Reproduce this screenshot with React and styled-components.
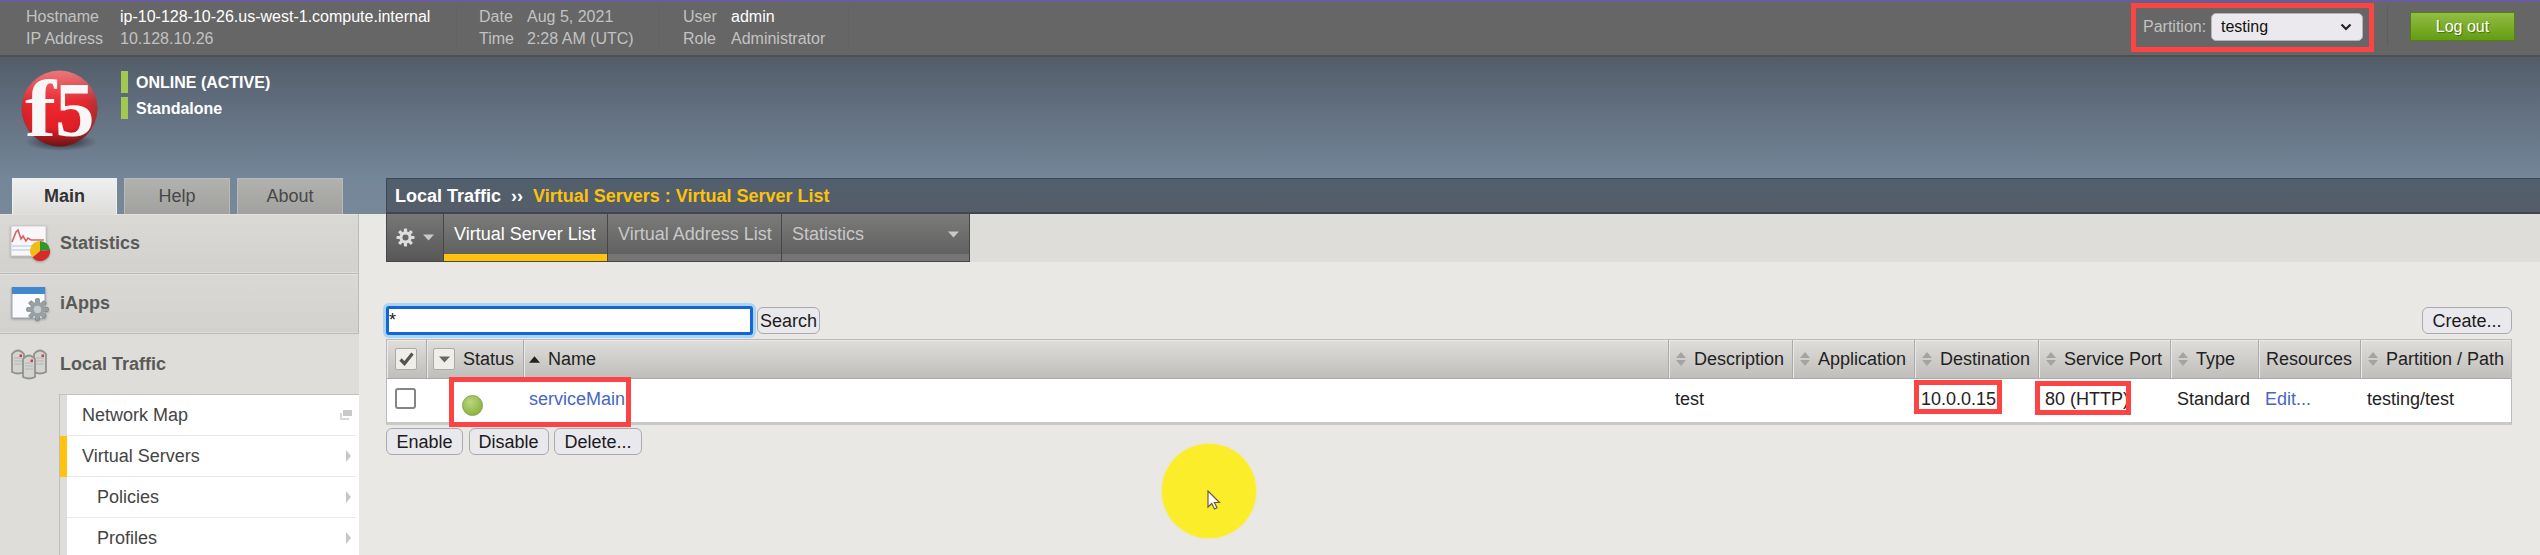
import React from 'react';
import styled, { createGlobalStyle } from 'styled-components';

const Global = createGlobalStyle`
  * { box-sizing: border-box; }
  body { margin: 0; background: #e9e8e4; }
`;

const Page = styled.div`
  position: relative;
  width: 2540px;
  height: 555px;
  overflow: hidden;
  background: #e9e8e4;
  font-family: "Liberation Sans", Arial, sans-serif;
  font-size: 18px;
  color: #222;
  white-space: nowrap;
`;

/* ---------- top bar ---------- */
const TopBar = styled.header`
  display: flex;
  height: 57px;
  padding-right: 25px;
  background: #666;
  border-top: 2px solid #6a5aa0;
  border-bottom: 2px solid #4c5253;
  font-size: 16px;
  color: #c2c2c2;
`;
const InfoGroup = styled.dl`
  display: grid;
  grid-template-columns: ${p => p.$label}px auto;
  grid-auto-rows: 22px;
  align-items: center;
  width: ${p => p.$width}px;
  height: 44px;
  margin: 4px 0 0;
  padding-left: ${p => p.$pad}px;
  border-right: 1px solid #626262;
`;
const InfoLabel = styled.dt`margin: 0;`;
const InfoValue = styled.dd`
  margin: 0;
  color: ${p => (p.$strong ? '#fff' : '#c2c2c2')};
`;
const TopRight = styled.div`
  display: flex;
  align-items: flex-start;
  margin-left: auto;
`;
const PartitionBox = styled.div`
  display: flex;
  align-items: center;
  justify-content: space-between;
  width: 243px;
  height: 49px;
  margin: 1px 13px 0 0;
  padding: 0 6px 2px 7px;
  border: 5px solid #fd4444;
`;
const Select = styled.div`
  display: flex;
  align-items: center;
  justify-content: space-between;
  width: 152px;
  height: 28px;
  padding: 0 10px 0 9px;
  border: 1px solid #b5b5b8;
  border-radius: 5px;
  background: #ebe9ed;
  color: #111;
`;
const LogoutArea = styled.div`
  height: 40px;
  margin-top: 4px;
  padding: 6px 0 0 22px;
  border-left: 1px solid #5e5e5e;
`;
const Logout = styled.button`
  display: block;
  width: 105px;
  height: 29px;
  padding: 0;
  border: 1px solid #568012;
  background: linear-gradient(#92bd45, #659c10);
  color: #fff;
  font: 16px "Liberation Sans", Arial, sans-serif;
  text-shadow: 1px 1px 1px #46700f;
`;

/* ---------- banner ---------- */
const Banner = styled.div`
  display: flex;
  flex-direction: column;
  justify-content: space-between;
  height: 157px;
  background: linear-gradient(#535d69 0, #5d6978 22%, #748699 77%, #778899 100%);
`;
const Brand = styled.div`
  display: flex;
  height: 100px;
  padding: 12px 0 0 16px;
`;
const StatusList = styled.div`
  display: flex;
  flex-direction: column;
  gap: 4px;
  margin: 2px 0 0 15px;
`;
const StatusLine = styled.div`
  height: 22px;
  padding-left: 8px;
  border-left: 7px solid #a2c753;
  color: #fff;
  font-size: 16px;
  font-weight: bold;
  line-height: 23px;
`;
const BannerBottom = styled.div`display: flex; height: 36px;`;
const Tabs = styled.nav`
  display: flex;
  gap: 7px;
  width: 386px;
  padding-left: 12px;
`;
const Tab = styled.a`
  width: ${p => p.$w}px;
  height: 36px;
  border: 1px solid ${p => (p.$active ? '#efefed' : '#b9b9b7')};
  border-bottom: 0;
  background: ${p => (p.$active ? 'linear-gradient(#eeefef, #deddda)' : 'linear-gradient(#b1b1ae, #a1a19f)')};
  color: ${p => (p.$active ? '#333' : '#484848')};
  font-weight: ${p => (p.$active ? 'bold' : 'normal')};
  line-height: 34px;
  text-align: center;
`;
const Breadcrumb = styled.div`
  display: flex;
  flex: 1;
  gap: 10px;
  padding-left: 8px;
  border: 1px solid #3c4656;
  border-width: 1px 0 2px 1px;
  background: linear-gradient(#515f6e, #555d67);
  color: #fff;
  font-weight: bold;
  line-height: 34px;
`;
const Current = styled.span`color: #fcc20c;`;

/* ---------- sidebar ---------- */
const Columns = styled.div`display: flex; height: 341px;`;
const Sidebar = styled.aside`
  width: 359px;
  background: #deddda;
`;
const Section = styled.div`
  display: flex;
  align-items: center;
  gap: 8px;
  height: 60px;
  padding: 0 0 0 8px;
  color: #5a5a58;
  font-weight: bold;
  ${p => !p.$open && `
    background: linear-gradient(#dad9d6, #d2d1ce);
    border-right: 1px solid #bbb;
    border-bottom: 1px solid #bcbbb8;
    box-shadow: inset 0 1px #e2e1df, inset 0 -1px #dddcd9;
  `}
`;
const SubMenu = styled.div`
  margin-left: 59px;
  border-left: 1px solid #bdbdba;
  border-top: 1px solid #c4c3c0;
`;
const SubItem = styled.a`
  display: flex;
  align-items: center;
  justify-content: space-between;
  height: 41px;
  padding: 0 7px 1px ${p => (p.$nested ? 30 : 15)}px;
  border-left: 7px solid ${p => (p.$selected ? '#ffc20e' : '#deddda')};
  background: linear-gradient(#e9e9e9, #e9e9e9) left bottom / calc(100% - 3px) 1px no-repeat #fff;
  color: #444;
`;

/* ---------- main area ---------- */
const Main = styled.main`flex: 1; padding-left: 27px;`;
const ToolStrip = styled.div`
  display: flex;
  height: 48px;
  background: #deddda;
`;
const Tool = styled.a`
  display: flex;
  align-items: center;
  justify-content: space-between;
  width: ${p => p.$w}px;
  height: 48px;
  padding: 0 ${p => p.$right || 0}px ${p => (p.$icons ? 0 : 7)}px ${p => (p.$icons ? 9 : 10)}px;
  border: 1px solid #474747;
  border-width: 0 1px 1px ${p => (p.$icons ? 1 : 0)}px;
  background: ${p => (p.$icons ? 'linear-gradient(#777, #575757)'
    : `linear-gradient(#7b7b79, #616161 40px, ${p.$active ? '#ffc20e' : '#757575'} 40px)`)};
  color: ${p => (p.$active ? '#fff' : '#c8c8c8')};
`;
const Controls = styled.div`
  display: flex;
  align-items: flex-start;
  height: 33px;
  margin: 44px 28px 0 0;
`;
const SearchField = styled.div`
  width: 367px;
  height: 29px;
  padding-left: 0;
  border: 3px solid #1564d8;
  border-radius: 3px;
  background: #fff;
  box-shadow: 0 0 0 3px #a9d5f5;
  line-height: 23px;
`;
const Button = styled.button`
  width: ${p => p.$w}px;
  height: 27px;
  padding: 0;
  border: 1px solid #aaa9ad;
  border-radius: 6px;
  background: #e9e8ed;
  color: #1b1b1b;
  font: 18px/24px "Liberation Sans", Arial, sans-serif;
`;
const SearchButton = styled(Button)`margin: 1px 0 0 4px;`;
const CreateButton = styled(Button)`margin: 1px 0 0 auto;`;

const columnsTemplate = '40px 97px 1145px 124px 122px 124px 132px 88px 102px 1fr';
const Table = styled.div`
  width: 2126px;
  border: 1px solid #bbb;
  border-bottom: 3px solid #c9c9c8;
`;
const HeadRow = styled.div`
  display: grid;
  grid-template-columns: ${columnsTemplate};
  height: 39px;
  border-bottom: 1px solid #aaa9a6;
  background: linear-gradient(#dfdedb, #bfbeba);
`;
const HeadCell = styled.div`
  display: flex;
  align-items: center;
  gap: 8px;
  padding-left: ${p => p.$pad ?? 7}px;
  border-right: 1px solid #aaa;
  box-shadow: inset 1px 1px #eae9e7;
  &:last-child { border-right: 0; }
`;
const Row = styled.div`
  display: grid;
  grid-template-columns: ${columnsTemplate};
  height: 43px;
  background: #fff;
`;
const Cell = styled.div`
  position: relative;
  padding: 10px 0 0 ${p => p.$pad ?? 6}px;
`;
const Link = styled.a`color: #4766c4;`;
const SmallBox = styled.span`
  display: flex;
  align-items: center;
  justify-content: center;
  width: 22px;
  height: 22px;
  border: 1px solid #aaa;
  border-radius: 2px;
  background: #efeee9;
`;
const CheckBox = styled.span`
  display: block;
  width: 21px;
  height: 21px;
  margin-top: -1px;
  border: 2px solid #858585;
  border-radius: 3px;
  background: #fff;
`;
const Dot = styled.span`
  display: block;
  width: 21px;
  height: 21px;
  margin-top: 6px;
  border: 1px solid #80a34a;
  border-radius: 50%;
  background: radial-gradient(circle at 40% 32%, #b9d583, #8fb842 70%, #79a13a);
`;
const Highlight = styled.span`
  position: absolute;
  left: ${p => p.$x}px;
  top: ${p => p.$y}px;
  width: ${p => p.$w}px;
  height: ${p => p.$h}px;
  border: 5px solid #fd4444;
  z-index: 2;
`;
const Actions = styled.div`
  display: flex;
  gap: 5.5px;
  margin-top: 3px;
`;
const Spotlight = styled.div`
  position: absolute;
  left: 1162px;
  top: 444px;
  width: 94px;
  height: 94px;
  border-radius: 50%;
  background: #fced2b;
  box-shadow: 0 0 2px #fced2b;
  svg { position: absolute; left: 45px; top: 46px; }
`;

/* ---------- drawings ---------- */
const LogoSvg = styled.svg`overflow: visible;`;
const IconSvg = styled.svg`filter: drop-shadow(0 1px 1px #999);`;
const Logo = () => (
  <LogoSvg width="90" height="84" viewBox="0 0 90 84">
    <defs>
      <radialGradient id="ball" cx=".45" cy=".45" r=".6">
        <stop offset="0" stopColor="#ee2229" /><stop offset=".65" stopColor="#e01f27" />
        <stop offset="1" stopColor="#9c2f30" />
      </radialGradient>
      <linearGradient id="shine" x2="0" y2="1">
        <stop offset="0" stopColor="#fff" stopOpacity=".4" /><stop offset=".4" stopColor="#fff" stopOpacity=".05" />
        <stop offset=".75" stopColor="#400" stopOpacity="0" /><stop offset="1" stopColor="#300" stopOpacity=".55" />
      </linearGradient>
      <radialGradient id="shade">
        <stop offset="0" stopColor="#22282f" /><stop offset="1" stopColor="#22282f" stopOpacity="0" />
      </radialGradient>
    </defs>
    <ellipse cx="45" cy="73" rx="36" ry="9" fill="url(#shade)" />
    <circle cx="43.5" cy="39.5" r="38" fill="url(#ball)" />
    <circle cx="43.5" cy="39.5" r="38" fill="url(#shine)" />
    <g fill="#f7f7f7" fontFamily="Liberation Serif, serif" fontWeight="bold">
      <text transform="translate(9 67) scale(1.17 1)" fontSize="80">f</text>
      <text transform="translate(39 67) scale(1 1)" fontSize="79">5</text>
    </g>
  </LogoSvg>
);
const Chevron = () => (
  <svg width="12" height="8" viewBox="0 0 12 8"><path d="M1.500 1.500 6 6l4.500-4.500" fill="none" stroke="#222" strokeWidth="2.200" /></svg>
);
const Gear = ({ size, color, hole, stroke }) => (
  <svg width={size} height={size} viewBox="-10 -10 20 20">
    <g fill={color} stroke={stroke} strokeWidth={stroke ? 0.6 : 0}>
      {[0, 45, 90, 135].map(a => <rect key={a} x="-1.700" y="-9.500" width="3.400" height="19" rx=".8" transform={`rotate(${a})`} />)}
    </g>
    <circle r="6.500" fill={color} /><circle r="3.200" fill={hole} />
  </svg>
);
const Down = ({ color = '#c9c9c9', w = 11 }) => (
  <svg width={w} height="7" viewBox="0 0 11 7"><path d="M0 .5h11L5.500 6.500z" fill={color} /></svg>
);
const Sort = () => (
  <svg width="10" height="14" viewBox="0 0 10 14"><path d="M0 6 5 0l5 6zM0 8h10l-5 6z" fill="#a5a4a1" /></svg>
);
const StatsIcon = () => (
  <IconSvg width="44" height="40" viewBox="0 0 44 40">
    <rect x="3" y="2" width="35" height="30" fill="#f8f8fa" stroke="#ccc" />
    <path d="M3.500 22h34M3.500 26h34" stroke="#d5def0" strokeWidth="2" />
    <path d="M4 18 8 8l2-2 3 9 2-3 3 5 2-3 3 2h13" fill="none" stroke="#d66464" strokeWidth="1.600" />
    <path d="M32 27V17a10 10 0 0 0-7.500 16.500z" fill="#f0bd18" />
    <path d="M32 27V17a10 10 0 0 1 10 9z" fill="#33962a" />
    <path d="M32 27l10-1a10 10 0 0 1-17.500 7.500z" fill="#d92b26" />
  </IconSvg>
);
const AppsIcon = () => (
  <IconSvg width="44" height="40" viewBox="0 0 44 40">
    <rect x="4" y="4" width="33" height="30" fill="#fafbfc" stroke="#9aa4ad" />
    <rect x="4" y="3" width="33" height="7" fill="#4288ce" />
    <g transform="translate(18 14)"><Gear size={23} color="#98a0a3" hole="#c6cbcd" stroke="#7b8386" /></g>
  </IconSvg>
);
const Server = ({ x, y }) => (
  <g transform={`translate(${x} ${y})`}>
    <path d="M1 5Q7 -2 13 5V23Q7 26 1 23z" fill="#d3d3d0" stroke="#92928f" strokeWidth="1.800" />
    <path d="M3 9h8M3 12h8M3 15h8" stroke="#b5b5b5" />
    <rect x="8.500" y="5.500" width="2.500" height="2.500" fill="#d23c3c" />
  </g>
);
const TrafficIcon = () => (
  <svg width="44" height="34" viewBox="0 0 44 34"><Server x={3} y={2} /><Server x={25} y={2} /><Server x={14} y={7} /></svg>
);
const Arrow = () => (
  <svg width="7" height="12" viewBox="0 0 7 12"><path d="M1 0 6 6 1 12z" fill="#c6c6c6" /></svg>
);
const WindowIcon = () => (
  <svg width="12" height="10" viewBox="0 0 12 10"><path d="M3 0h9v6H3z" fill="#c9c9c9" /><path d="M1 3v6h8" fill="none" stroke="#ccc" strokeWidth="1.500" /></svg>
);
const Check = () => (
  <svg width="15" height="14" viewBox="0 0 15 14"><path d="M1.500 7.500 5.500 11.500 13.500 1.500" fill="none" stroke="#555" strokeWidth="3.200" /></svg>
);
const Pointer = () => (
  <svg width="14" height="20" viewBox="0 0 14 20"><path d="M1 1v16l3.700-3.500L7.500 19l2.500-1.200-2.600-5.300H12.500z" fill="#fff" stroke="#6b5a3a" strokeWidth="1.200" /></svg>
);

const sortable = ['Description', 'Application', 'Destination', 'Service Port', 'Type'];

export default function App() {
  return (
    <Page>
      <Global />
      <TopBar>
        <InfoGroup $label={94} $width={457} $pad={26}>
          <InfoLabel>Hostname</InfoLabel><InfoValue $strong>ip-10-128-10-26.us-west-1.compute.internal</InfoValue>
          <InfoLabel>IP Address</InfoLabel><InfoValue>10.128.10.26</InfoValue>
        </InfoGroup>
        <InfoGroup $label={48} $width={203} $pad={22}>
          <InfoLabel>Date</InfoLabel><InfoValue>Aug 5, 2021</InfoValue>
          <InfoLabel>Time</InfoLabel><InfoValue>2:28 AM (UTC)</InfoValue>
        </InfoGroup>
        <InfoGroup $label={48} $width={189} $pad={23}>
          <InfoLabel>User</InfoLabel><InfoValue $strong>admin</InfoValue>
          <InfoLabel>Role</InfoLabel><InfoValue>Administrator</InfoValue>
        </InfoGroup>
        <TopRight>
          <PartitionBox>Partition:<Select>testing<Chevron /></Select></PartitionBox>
          <LogoutArea><Logout>Log out</Logout></LogoutArea>
        </TopRight>
      </TopBar>

      <Banner>
        <Brand>
          <Logo />
          <StatusList>
            <StatusLine>ONLINE (ACTIVE)</StatusLine>
            <StatusLine>Standalone</StatusLine>
          </StatusList>
        </Brand>
        <BannerBottom>
          <Tabs>
            <Tab $w={105} $active>Main</Tab>
            <Tab $w={106}>Help</Tab>
            <Tab $w={106}>About</Tab>
          </Tabs>
          <Breadcrumb>
            <span>Local Traffic</span><span>››</span><Current>Virtual Servers : Virtual Server List</Current>
          </Breadcrumb>
        </BannerBottom>
      </Banner>

      <Columns>
        <Sidebar>
          <Section><StatsIcon />Statistics</Section>
          <Section><AppsIcon />iApps</Section>
          <Section $open><TrafficIcon />Local Traffic</Section>
          <SubMenu>
            <SubItem>Network Map<WindowIcon /></SubItem>
            <SubItem $selected>Virtual Servers<Arrow /></SubItem>
            <SubItem $nested>Policies<Arrow /></SubItem>
            <SubItem $nested>Profiles<Arrow /></SubItem>
          </SubMenu>
        </Sidebar>

        <Main>
          <ToolStrip>
            <Tool $w={58} $icons $right={9}><Gear size={19} color="#ddd" hole="#666" /><Down /></Tool>
            <Tool $w={164} $active>Virtual Server List</Tool>
            <Tool $w={174}>Virtual Address List</Tool>
            <Tool $w={188} $right={10}>Statistics<Down /></Tool>
          </ToolStrip>
          <Controls>
            <SearchField>*</SearchField>
            <SearchButton $w={63}>Search</SearchButton>
            <CreateButton $w={90}>Create...</CreateButton>
          </Controls>
          <Table>
            <HeadRow>
              <HeadCell $pad={8}><SmallBox><Check /></SmallBox></HeadCell>
              <HeadCell $pad={6}><SmallBox><Down color="#666" /></SmallBox>Status</HeadCell>
              <HeadCell $pad={5}>
                <svg width="11" height="7" viewBox="0 0 12 7"><path d="M0 7 6 0l6 7z" fill="#222" /></svg>Name
              </HeadCell>
              {sortable.map(name => <HeadCell key={name}><Sort />{name}</HeadCell>)}
              <HeadCell>Resources</HeadCell>
              <HeadCell><Sort />Partition / Path</HeadCell>
            </HeadRow>
            <Row>
              <Cell $pad={8}><CheckBox /></Cell>
              <Cell $pad={35}><Dot /><Highlight $x={22} $y={-2} $w={182} $h={50} /></Cell>
              <Cell $pad={5}><Link>serviceMain</Link></Cell>
              <Cell>test</Cell>
              <Cell />
              <Cell>10.0.0.15<Highlight $x={-1} $y={1} $w={88} $h={34} /></Cell>
              <Cell>80 (HTTP)<Highlight $x={-4} $y={2} $w={96} $h={34} /></Cell>
              <Cell>Standard</Cell>
              <Cell><Link>Edit...</Link></Cell>
              <Cell>testing/test</Cell>
            </Row>
          </Table>
          <Actions>
            <Button $w={77}>Enable</Button>
            <Button $w={80}>Disable</Button>
            <Button $w={88}>Delete...</Button>
          </Actions>
        </Main>
      </Columns>
      <Spotlight><Pointer /></Spotlight>
    </Page>
  );
}
